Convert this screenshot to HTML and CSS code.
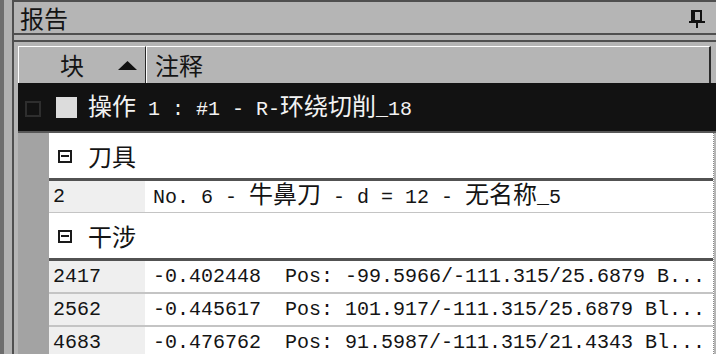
FILE: index.html
```html
<!DOCTYPE html>
<html lang="zh-CN">
<head>
    <meta charset="UTF-8">
    <title>报告</title>
    <link rel="stylesheet" href="styles.css">
</head>
<body>
    <div class="window">
        <div class="dock-edge"></div>
        <div class="dock">
            <div class="titlebar">
                <span class="zh">报告</span>
                <svg class="pin" width="18" height="18" viewBox="0 0 18 18">
                    <rect x="4" y="1" width="9" height="10" fill="none" stroke="#111" stroke-width="2"/>
                    <rect x="5" y="2" width="2" height="9" fill="#111"/>
                    <rect x="1" y="11" width="16" height="2" fill="#111"/>
                    <rect x="8" y="13" width="2" height="5" fill="#111"/>
                </svg>
            </div>
            <div class="gap"></div>
            <div class="panel">
                <div class="report">
                    <div class="header">
                        <div class="head-cell head-block">
                            <span class="zh">块</span>
                            <svg width="19" height="9" viewBox="0 0 19 9"><polygon points="9.5,0 19,9 0,9" fill="#111"/></svg>
                        </div>
                        <div class="head-cell head-note"><span class="zh">注释</span></div>
                    </div>
                    <div class="op-row">
                        <span class="op-toggle"></span>
                        <span class="op-check"></span>
                        <span class="op-text"><span class="zh">操作</span> 1 : #1 - R-<span class="zh">环绕切削</span>_18</span>
                    </div>
                    <div class="body">
                        <div class="gutter"></div>
                        <div class="rows">
                            <div class="group-row">
                                <span class="toggle"></span>
                                <span class="zh">刀具</span>
                            </div>
                            <div class="data-row">
                                <div class="cell-id">2</div>
                                <div class="cell-note">No. 6 - <span class="zh">牛鼻刀</span> - d = 12 - <span class="zh">无名称</span>_5</div>
                            </div>
                            <div class="group-row">
                                <span class="toggle"></span>
                                <span class="zh">干涉</span>
                            </div>
                            <div class="data-row">
                                <div class="cell-id">2417</div>
                                <div class="cell-note">-0.402448  Pos: -99.5966/-111.315/25.6879 B...</div>
                            </div>
                            <div class="data-row">
                                <div class="cell-id">2562</div>
                                <div class="cell-note">-0.445617  Pos: 101.917/-111.315/25.6879 Bl...</div>
                            </div>
                            <div class="data-row">
                                <div class="cell-id">4683</div>
                                <div class="cell-note">-0.476762  Pos: 91.5987/-111.315/21.4343 Bl...</div>
                            </div>
                        </div>
                    </div>
                </div>
            </div>
        </div>
    </div>
</body>
</html>
```

FILE: styles.css
```css
* {
    box-sizing: border-box;
}
body {
    margin: 0;
    width: 716px;
    height: 354px;
    overflow: hidden;
    background: #b5b5b5;
    color: #141414;
    font-family: "Liberation Mono", "Noto Sans CJK SC", monospace;
    font-size: 20px;
}
.zh {
    font-family: "Noto Sans CJK SC", sans-serif;
    font-size: 24px;
    line-height: 1;
}
.window {
    display: flex;
    height: 354px;
}
.dock-edge {
    width: 12px;
    flex-shrink: 0;
    border-left: 4px solid #6d6d6d;
    background: #b1b1b1;
}
.dock {
    flex: 1;
    display: flex;
    flex-direction: column;
    min-height: 0;
    border-left: 2px solid #4f4f4f;
}
.titlebar {
    flex-shrink: 0;
    height: 35px;
    border-top: 2px solid #4f4f4f;
    border-bottom: 2px solid #4f4f4f;
    display: flex;
    align-items: center;
    justify-content: space-between;
    padding: 0 10px 0 6px;
}
.pin {
    margin-top: 2px;
}
.gap {
    flex-shrink: 0;
    height: 5px;
}
.panel {
    flex: 1;
    min-height: 0;
    overflow: hidden;
    border-top: 2px solid #4f4f4f;
    padding: 4px 0 0 4px;
}
.header {
    display: flex;
    height: 37px;
    margin-right: 5px;
}
.head-cell {
    display: flex;
    align-items: center;
    border-top: 1px solid #ffffff;
    border-left: 1px solid #ffffff;
}
.head-block {
    width: 128px;
    justify-content: space-between;
    padding: 0 8px 0 41px;
    border-right: 1px solid #2a2a2a;
}
.head-note {
    flex: 1;
    padding-left: 8px;
    border-right: 2px solid #2a2a2a;
}
.op-row {
    display: flex;
    align-items: center;
    height: 50px;
    padding-left: 7px;
    background: #121212;
    color: #f2f2f2;
    border-bottom: 2px solid #575757;
}
.op-toggle {
    width: 16px;
    height: 16px;
    margin: 4px 15px 0 0;
    border: 2px solid #2e2e2e;
}
.op-check {
    width: 21px;
    height: 21px;
    margin-right: 11px;
    background: #dcdcdc;
}
.op-text {
    white-space: pre;
}
.body {
    display: flex;
}
.gutter {
    width: 31px;
    background: #a3a3a3;
}
.rows {
    flex: 1;
    background: #ffffff;
    border-right: 1px dotted #8a8a8a;
    margin-right: 2px;
}
.group-row {
    display: flex;
    align-items: center;
    height: 48px;
    padding-left: 9px;
    border-bottom: 3px solid #525252;
}
.toggle {
    position: relative;
    width: 14px;
    height: 13px;
    margin: 2px 16px 0 0;
    border: 2px solid #1a1a1a;
}
.toggle::after {
    content: "";
    position: absolute;
    left: 1px;
    right: 1px;
    top: 3px;
    height: 2px;
    background: #1a1a1a;
}
.data-row {
    display: flex;
    height: 33px;
    line-height: 31px;
    border-bottom: 2px solid #c4c4c4;
    white-space: pre;
}
.data-row:nth-child(2) {
    height: 32px;
    border-bottom-width: 1px;
}
.cell-id {
    width: 96px;
    padding-left: 4px;
    background: #efefef;
}
.cell-note {
    flex: 1;
    padding-left: 8px;
}
```
